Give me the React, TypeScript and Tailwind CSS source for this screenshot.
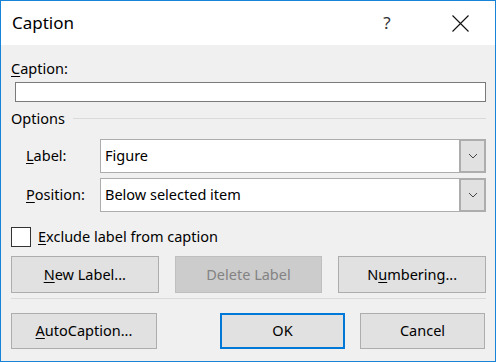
import React from "react";

const font = "font-['Segoe_UI','Noto_Sans',sans-serif]";

const U = ({ children }: { children: React.ReactNode }) => (
  <span className="underline underline-offset-2 decoration-1">{children}</span>
);

const Combo = ({ value }: { value: string }) => (
  <div className="flex-1 flex h-[34px] border border-[#adadad] bg-white">
    <div className="flex-1 flex items-center pl-[4px] text-[14.5px] text-black">
      {value}
    </div>
    <div className="w-[27px] -my-px -mr-px flex items-center justify-center border-2 border-[#adadad] bg-[#e1e1e1]">
      <svg width="10" height="6" viewBox="0 0 10 6">
        <path d="M1 1 L5 5 L9 1" fill="none" stroke="#444" strokeWidth="1" />
      </svg>
    </div>
  </div>
);

const Btn = ({
  children,
  disabled,
  primary,
  className = "",
}: {
  children: React.ReactNode;
  disabled?: boolean;
  primary?: boolean;
  className?: string;
}) => (
  <button
    className={
      "flex items-center justify-center text-[14.5px] " +
      (disabled
        ? "bg-[#cccccc] border border-[#bfbfbf] text-[#838383] "
        : primary
        ? "bg-[#e1e1e1] border-2 border-[#0078d7] text-black "
        : "bg-[#e1e1e1] border border-[#adadad] text-black ") +
      className
    }
  >
    {children}
  </button>
);

export default function App() {
  return (
    <div className={"w-[496px] h-[362px] border border-[#1883d7] flex flex-col " + font}>
      {/* title bar */}
      <div className="h-[44px] bg-white flex items-center">
        <div className="pl-[11px] text-[17px] text-black flex-1">Caption</div>
        <div className="w-[20px] text-[17px] text-[#333] text-center mr-[55px]">?</div>
        <div className="mr-[26px] flex items-center">
          <svg width="17" height="17" viewBox="0 0 17 17">
            <path d="M0.5 0.5 L16.5 16.5 M16.5 0.5 L0.5 16.5" stroke="#111" strokeWidth="1.1" />
          </svg>
        </div>
      </div>

      {/* body */}
      <div className="flex-1 bg-[#f0f0f0] pl-[10px] pr-[9px] pt-[13px] text-black">
        <div className="h-[20px] leading-[20px] text-[14.5px]">
          <U>C</U>aption:
        </div>
        <div className="mt-[4px] ml-[4px] h-[20px] border border-[#7a7a7a] bg-white" />

        <div className="mt-[6px] h-[20px] flex items-center gap-[8px]">
          <span className="text-[14.5px] leading-[20px]">Options</span>
          <div className="flex-1 h-px bg-[#dadada]" />
        </div>

        <div className="mt-[11px] flex items-center">
          <div className="w-[89px] pl-[15px] text-[14.5px]">
            <U>L</U>abel:
          </div>
          <Combo value="Figure" />
        </div>
        <div className="mt-[5px] flex items-center">
          <div className="w-[89px] pl-[15px] text-[14.5px]">
            <U>P</U>osition:
          </div>
          <Combo value="Below selected item" />
        </div>

        <div className="mt-[15px] h-[20px] flex items-center gap-[7px]">
          <div className="w-[20px] h-[20px] border border-[#333] bg-white" />
          <span className="text-[14.5px]">
            <U>E</U>xclude label from caption
          </span>
        </div>

        <div className="mt-[9px] grid grid-cols-3 gap-[16px] h-[37px]">
          <Btn>
            <U>N</U>ew Label...
          </Btn>
          <Btn disabled>Delete Label</Btn>
          <Btn>
            N<U>u</U>mbering...
          </Btn>
        </div>

        <div className="mt-[5px] h-px bg-[#dadada]" />

        <div className="mt-[14px] flex h-[36px]">
          <Btn className="w-[146px]">
            <U>A</U>utoCaption...
          </Btn>
          <Btn primary className="w-[125px] ml-[63px]">
            OK
          </Btn>
          <Btn className="w-[125px] ml-[15px]">Cancel</Btn>
        </div>
      </div>
    </div>
  );
}
